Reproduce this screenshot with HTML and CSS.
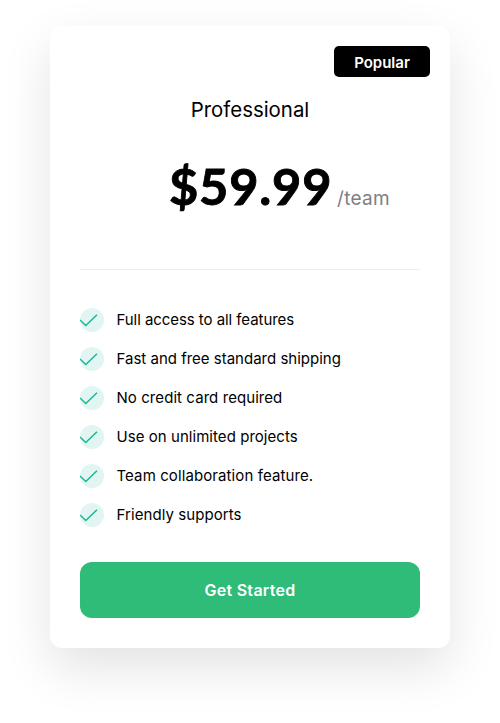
FILE: index.html
```html
<!DOCTYPE html>
<html lang="en">
<head>
<meta charset="utf-8">
<title>Professional plan</title>
<link rel="stylesheet" href="styles.css">
</head>
<body>
<svg class="sprite" aria-hidden="true"><symbol id="check" viewBox="0 0 24 24"><path d="M0 12 L5.8 17.5 L17 6.7" fill="none" stroke="#1cb698" stroke-width="1.5"/></symbol></svg>
<main class="card">
  <div class="badge"><span>Popular</span></div>
  <h1 class="plan"><span>Professional</span></h1>
  <div class="price"><span class="amount">$59.99</span><span class="period">/team</span></div>
  <hr class="divider">
  <ul class="features">
    <li><svg class="check"><use href="#check"/></svg><span class="f1">Full access to all features</span></li>
    <li><svg class="check"><use href="#check"/></svg><span>Fast and free standard shipping</span></li>
    <li><svg class="check"><use href="#check"/></svg><span class="f3">No credit card required</span></li>
    <li><svg class="check"><use href="#check"/></svg><span class="f4">Use on unlimited projects</span></li>
    <li><svg class="check"><use href="#check"/></svg><span class="f5">Team collaboration feature.</span></li>
    <li><svg class="check"><use href="#check"/></svg><span class="f6">Friendly supports</span></li>
  </ul>
  <button class="cta" type="button"><span>Get Started</span></button>
</main>
</body>
</html>
```
FILE: styles.css
```css
* { box-sizing: border-box; }
body { margin: 0; height: 723px; padding: 26px 50px; background: #fff; color: #000; font-family: Inter, sans-serif; overflow: hidden; }
.sprite { position: absolute; width: 0; height: 0; }
.card { display: flex; flex-direction: column; height: 622px; padding: 20px 30px 30px; background: #fff; border-radius: 12px; box-shadow: 0 20px 50px rgba(0, 0, 0, .115); }
.badge { align-self: flex-end; margin-right: -10px; width: 96px; height: 31px; border-radius: 5px; background: #000; color: #fff; font-size: 15px; font-weight: 600; line-height: 33px; text-align: center; }
.plan { margin: 19px 0 0; height: 28px; font-size: 20.4px; font-weight: 400; line-height: 28px; text-align: center; }
.price { display: flex; align-items: baseline; height: 64px; margin: 30px 0 0 89px; line-height: 64px; white-space: nowrap; }
.amount { font-family: Lato, sans-serif; font-size: 50.5px; font-weight: 700; width: 168px; letter-spacing: .8px; -webkit-text-stroke: .9px #000; }
.period { color: #808080; font-size: 19px; letter-spacing: .3px; }
.divider { width: 100%; height: 1px; margin: 51px 0 38px; border: 0; background: #ececec; }
.features { display: grid; gap: 15px; margin: 0; padding: 0; list-style: none; font-size: 15px; line-height: 24px; }
.features li { display: flex; height: 24px; gap: 12.5px; white-space: nowrap; }
.f1 { letter-spacing: -.06px; }
.f3 { letter-spacing: .07px; }
.f4 { letter-spacing: .05px; }
.f5 { letter-spacing: .1px; }
.f6 { letter-spacing: .07px; }
.check { flex: none; width: 24px; height: 24px; border-radius: 50%; background: #e1f5f2; }
.cta { height: 56px; margin-top: auto; padding: 0; border: 0; border-radius: 12px; background: #2fbb78; color: #fff; font: 600 16px/56px Inter, sans-serif; letter-spacing: .28px; }
```
